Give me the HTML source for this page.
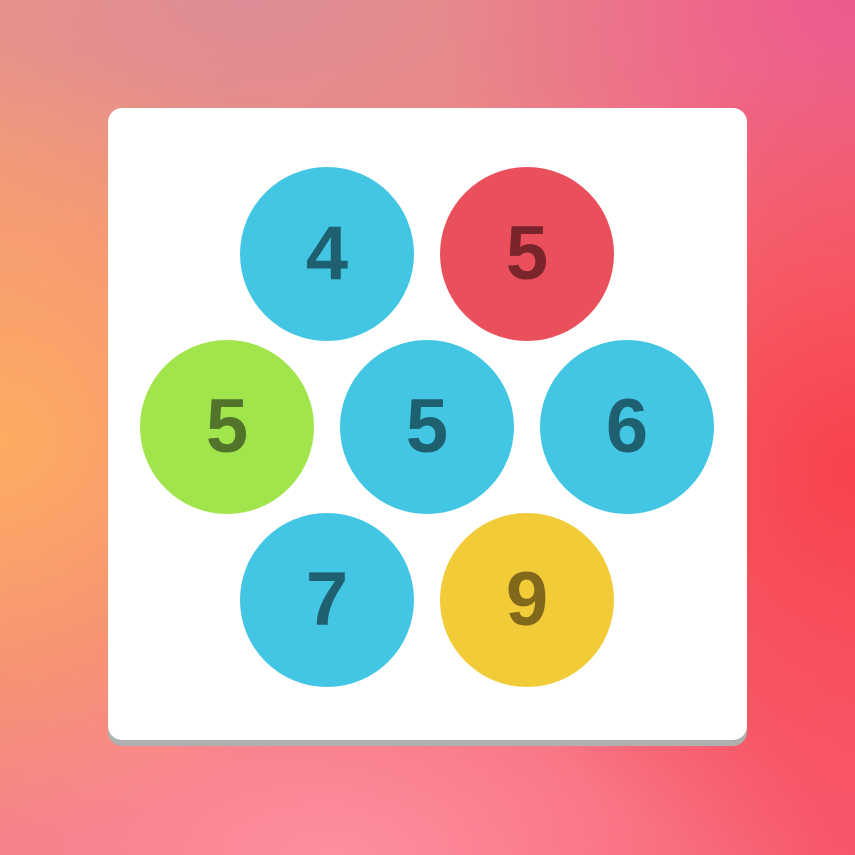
<!DOCTYPE html>
<html><head><style>
html,body{margin:0;padding:0}
body{width:855px;height:855px;overflow:hidden;position:relative;
background:
radial-gradient(ellipse 430px 400px at 0px 440px,rgba(253,172,98,1),rgba(253,172,98,0) 100%),
radial-gradient(ellipse 400px 420px at 855px 470px,rgba(249,66,76,1),rgba(249,66,76,0) 100%),
radial-gradient(ellipse 420px 320px at 855px 0px,rgba(236,90,142,1),rgba(236,90,142,0) 100%),
radial-gradient(ellipse 500px 260px at 330px 855px,rgba(254,142,160,1),rgba(254,142,160,0) 100%),
radial-gradient(ellipse 520px 260px at 250px 0px,rgba(222,140,150,1),rgba(222,140,150,0) 100%),
linear-gradient(135deg,#ee9a80 0%,#f27a80 50%,#f7586e 100%);}
.card{position:absolute;left:108px;top:108px;width:639px;height:632px;background:#fff;border-radius:14px;box-shadow:0 6px 0 #b0b0b0;}
.c{position:absolute;width:174px;height:174px;border-radius:50%;display:flex;align-items:center;justify-content:center;
font-family:"Liberation Sans",sans-serif;font-weight:bold;font-size:76px;line-height:1;}
.b{background:#42c6e3;color:#1f6070}
.r{background:#ea505b;color:#7a252b}
.g{background:#a1e54c;color:#52732a}
.y{background:#f2cb39;color:#81681b}
</style></head><body>
<div class="card"></div>
<div class="c b" style="left:240px;top:167px">4</div>
<div class="c r" style="left:440px;top:167px">5</div>
<div class="c g" style="left:140px;top:340px">5</div>
<div class="c b" style="left:340px;top:340px">5</div>
<div class="c b" style="left:540px;top:340px">6</div>
<div class="c b" style="left:240px;top:513px">7</div>
<div class="c y" style="left:440px;top:513px">9</div>
</body></html>
